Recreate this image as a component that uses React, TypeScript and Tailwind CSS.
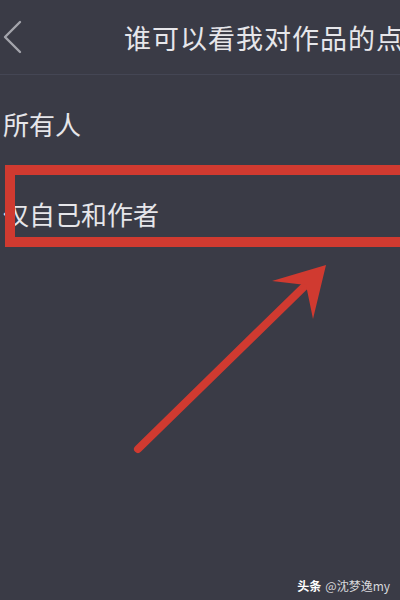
const cjk = { fontFamily: '"Noto Sans CJK SC", "Noto Sans", sans-serif' };

const options = ["所有人", "仅自己和作者"];

const BackIcon = () => (
  <svg className="shrink-0" width="26" height="36" viewBox="0 0 26 36" fill="none">
    <polyline points="21,3 6,18 21,33" stroke="#a3a4ac" strokeWidth="2.4" strokeLinecap="round" strokeLinejoin="round" />
  </svg>
);

const App = () => {
  return (
    <div className="relative w-[400px] h-[600px] overflow-hidden bg-[#3a3b46] text-[#e6e6ea]" style={cjk}>
      {/* Header */}
      <header className="flex items-center h-[75px] border-b border-[#444654]">
        <div className="-ml-[1px]">
          <BackIcon />
        </div>
        <h1 className="ml-[99px] whitespace-nowrap text-[27px] leading-none tracking-[1px]">
          谁可以看我对作品的点赞
        </h1>
      </header>

      {/* Options */}
      <div className="mt-[4px] flex flex-col">
        {options.map((label) => (
          <div key={label} className="flex items-center h-[90px] pl-[3px]">
            <span className="text-[26px] leading-none">{label}</span>
          </div>
        ))}
      </div>

      {/* Annotation: box and arrow */}
      <svg className="absolute inset-0 pointer-events-none" width="400" height="600" viewBox="0 0 400 600">
        <rect x="10" y="170" width="400" height="72" fill="none" stroke="#d03a30" strokeWidth="10" />
        <line x1="138" y1="449" x2="312" y2="279" stroke="#d03a30" strokeWidth="8" strokeLinecap="round" />
        <polygon points="326,265 272,281 306,285 313,319" fill="#d03a30" />
      </svg>

      {/* Watermark */}
      <div className="absolute right-[10px] bottom-[8px] flex items-center gap-[4px] text-[12px] leading-none">
        <span className="font-bold text-white">头条</span>
        <span className="text-[#d8d8dc]">@沈梦逸my</span>
      </div>
    </div>
  );
};

export default App;
